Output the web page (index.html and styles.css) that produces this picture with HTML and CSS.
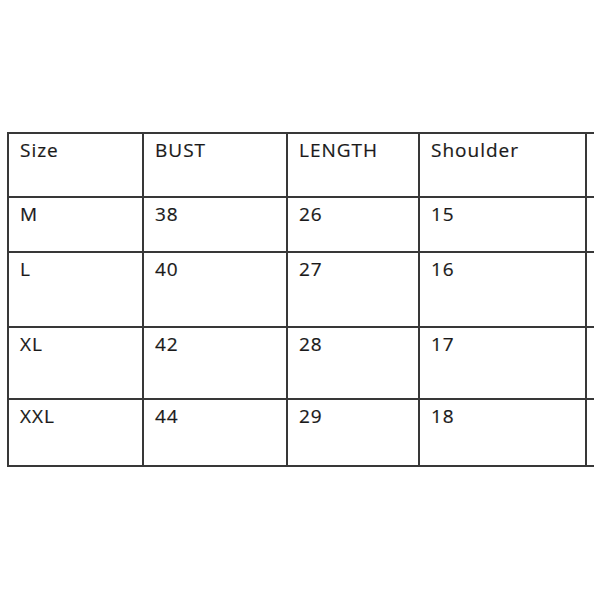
FILE: index.html
```html
<!DOCTYPE html>
<html lang="en">
<head>
<meta charset="utf-8">
<title>Size chart</title>
<link rel="stylesheet" href="styles.css">
</head>
<body>
<div class="chart" role="table">
  <div class="cell">Size</div><div class="cell">BUST</div><div class="cell">LENGTH</div><div class="cell">Shoulder</div><div class="cell edge"></div>
  <div class="cell">M</div><div class="cell">38</div><div class="cell">26</div><div class="cell">15</div><div class="cell edge"></div>
  <div class="cell">L</div><div class="cell">40</div><div class="cell">27</div><div class="cell">16</div><div class="cell edge"></div>
  <div class="cell">XL</div><div class="cell">42</div><div class="cell">28</div><div class="cell">17</div><div class="cell edge"></div>
  <div class="cell">XXL</div><div class="cell">44</div><div class="cell">29</div><div class="cell">18</div><div class="cell edge"></div>
</div>
</body>
</html>
```

FILE: styles.css
```css
html, body {
  margin: 0;
  padding: 0;
  background: #ffffff;
}

body {
  width: 600px;
  height: 600px;
  overflow: hidden;
  font-family: "Open Sans", "Liberation Sans", sans-serif;
}

.chart {
  display: grid;
  grid-template-columns: 133px 142px 130px 165px 7px;
  grid-template-rows: 62px 53px 73px 70px 65px;
  gap: 2px;
  width: fit-content;
  margin: 132px 0 0 7px;
  padding: 2px 0 2px 2px;
  background: #383838;
}

.cell {
  background: #ffffff;
  color: #1a1a1a;
  font-size: 19px;
  line-height: 24px;
  letter-spacing: 1px;
  padding: 4px 0 0 11px;
  -webkit-text-stroke: 0.2px #1a1a1a;
}

.edge {
  padding: 0;
}
```
